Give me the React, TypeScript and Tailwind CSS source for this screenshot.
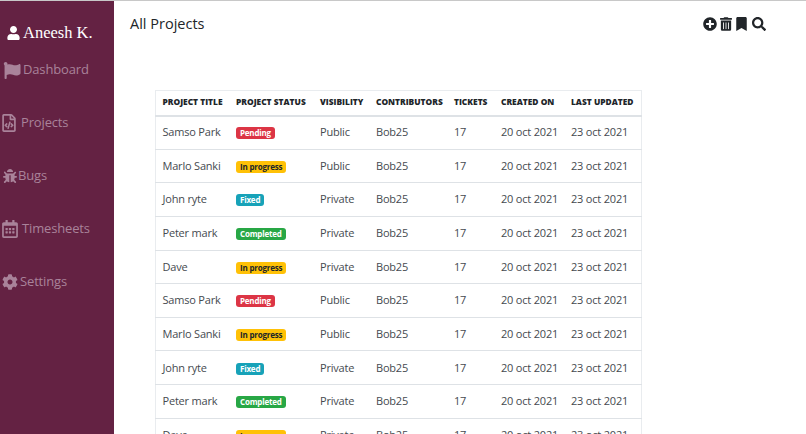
import { FaUser, FaFlag, FaRegFileCode, FaBug, FaRegCalendarAlt, FaCog, FaPlusCircle, FaTrashAlt, FaBookmark, FaSearch } from "react-icons/fa";

const base = [
  ["Samso Park", "Pending", "Public"],
  ["Marlo Sanki", "In progress", "Public"],
  ["John ryte", "Fixed", "Private"],
  ["Peter mark", "Completed", "Private"],
  ["Dave", "In progress", "Private"],
];
const rows = [...base, ...base];

function Badge({ s }: { s: string }) {
  const c =
    s === "Pending"
      ? "bg-[#dc3545] text-white"
      : s === "In progress"
        ? "bg-[#ffc107] text-[#212529]"
        : s === "Fixed"
          ? "bg-[#17a2b8] text-white"
          : "bg-[#28a745] text-white";
  return <span className={`inline-block rounded-[3px] px-[4px] py-[1px] align-middle text-[8px] font-bold leading-[10px] ${c}`}>{s}</span>;
}

const nav = [
  { icon: <FaFlag className="h-[17px] w-[18px]" />, label: "Dashboard", pl: "pl-[3px]", gap: "gap-[2px]" },
  { icon: <FaRegFileCode className="h-[18px] w-[14px]" />, label: "Projects", pl: "pl-[2px]", gap: "gap-[5px]" },
  { icon: <FaBug className="h-[14px] w-[14px]" />, label: "Bugs", pl: "pl-[3px]", gap: "gap-[1px]" },
  { icon: <FaRegCalendarAlt className="h-[18px] w-[16px]" />, label: "Timesheets", pl: "pl-[2px]", gap: "gap-[4px]" },
  { icon: <FaCog className="h-[16px] w-[16px]" />, label: "Settings", pl: "pl-[2px]", gap: "gap-[2px]" },
];

const th = "pl-[6.5px] pr-[7px] h-[25px] border-b-2 border-[#dee2e6] text-left text-[8.4px] font-extrabold uppercase text-[#212529] whitespace-nowrap";
const td = "pl-[6.5px] pr-[7px] h-[33.65px] border-b border-[#dee2e6] text-[11px] tracking-[-0.2px] text-[#454a4f] whitespace-nowrap";

const widths = ["w-[74px]", "w-[84px]", "w-[56px]", "w-[78px]", "w-[47px]", "w-[70px]", "w-[77px]"];
const heads = ["Project Title", "Project Status", "Visibility", "Contributors", "Tickets", "Created On", "Last Updated"];

export default function App() {
  return (
    <div className="flex h-[434px] w-[806px] flex-col overflow-hidden bg-white [font-family:'Open_Sans','Noto_Sans',sans-serif]">
      <div className="h-px shrink-0 bg-[#c8c8c8]" />
      <div className="flex min-h-0 flex-1">
        <aside className="flex w-[114px] shrink-0 flex-col bg-[#642243]">
          <div className="mt-[22px] flex h-[20px] items-center gap-[3px] pl-[7px] text-white">
            <FaUser className="h-[14px] w-[13px]" />
            <span className="text-[16.5px] leading-none [font-family:'Liberation_Serif',serif]">Aneesh K.</span>
          </div>
          <nav className="mt-[17px] flex flex-col gap-[33px]">
            {nav.map((n) => (
              <div key={n.label} className={`flex h-[20px] items-center text-[13px] tracking-[-0.15px] text-[#a9839a] ${n.pl} ${n.gap}`}>
                {n.icon}
                <span>{n.label}</span>
              </div>
            ))}
          </nav>
        </aside>
        <main className="min-w-0 flex-1">
          <header className="flex h-[46px] items-start justify-between pl-[16px] pr-[40px] pt-[13px]">
            <h1 className="text-[14.5px] leading-[20px] text-[#212529]">All Projects</h1>
            <div className="flex items-center pt-[3px] text-[#212529]">
              <FaPlusCircle className="h-[14px] w-[14px]" />
              <FaTrashAlt className="ml-[3px] h-[14px] w-[12px]" />
              <FaBookmark className="ml-[4px] h-[14px] w-[11px]" />
              <FaSearch className="ml-[5px] h-[14px] w-[14px]" />
            </div>
          </header>
          <div className="ml-[41px] mt-[43px] w-[486px]">
            <table className="w-[486px] table-fixed border-collapse border border-[#e9ecef]">
              <colgroup>
                {widths.map((w) => (
                  <col key={w} className={w} />
                ))}
              </colgroup>
              <thead>
                <tr>
                  {heads.map((h) => (
                    <th key={h} className={th}>{h}</th>
                  ))}
                </tr>
              </thead>
              <tbody>
                {rows.map((r, i) => (
                  <tr key={i}>
                    <td className={td}>{r[0]}</td>
                    <td className={td}><Badge s={r[1]} /></td>
                    <td className={td}>{r[2]}</td>
                    <td className={td}>Bob25</td>
                    <td className={td}>17</td>
                    <td className={td}>20 oct 2021</td>
                    <td className={td}>23 oct 2021</td>
                  </tr>
                ))}
              </tbody>
            </table>
          </div>
        </main>
      </div>
    </div>
  );
}
